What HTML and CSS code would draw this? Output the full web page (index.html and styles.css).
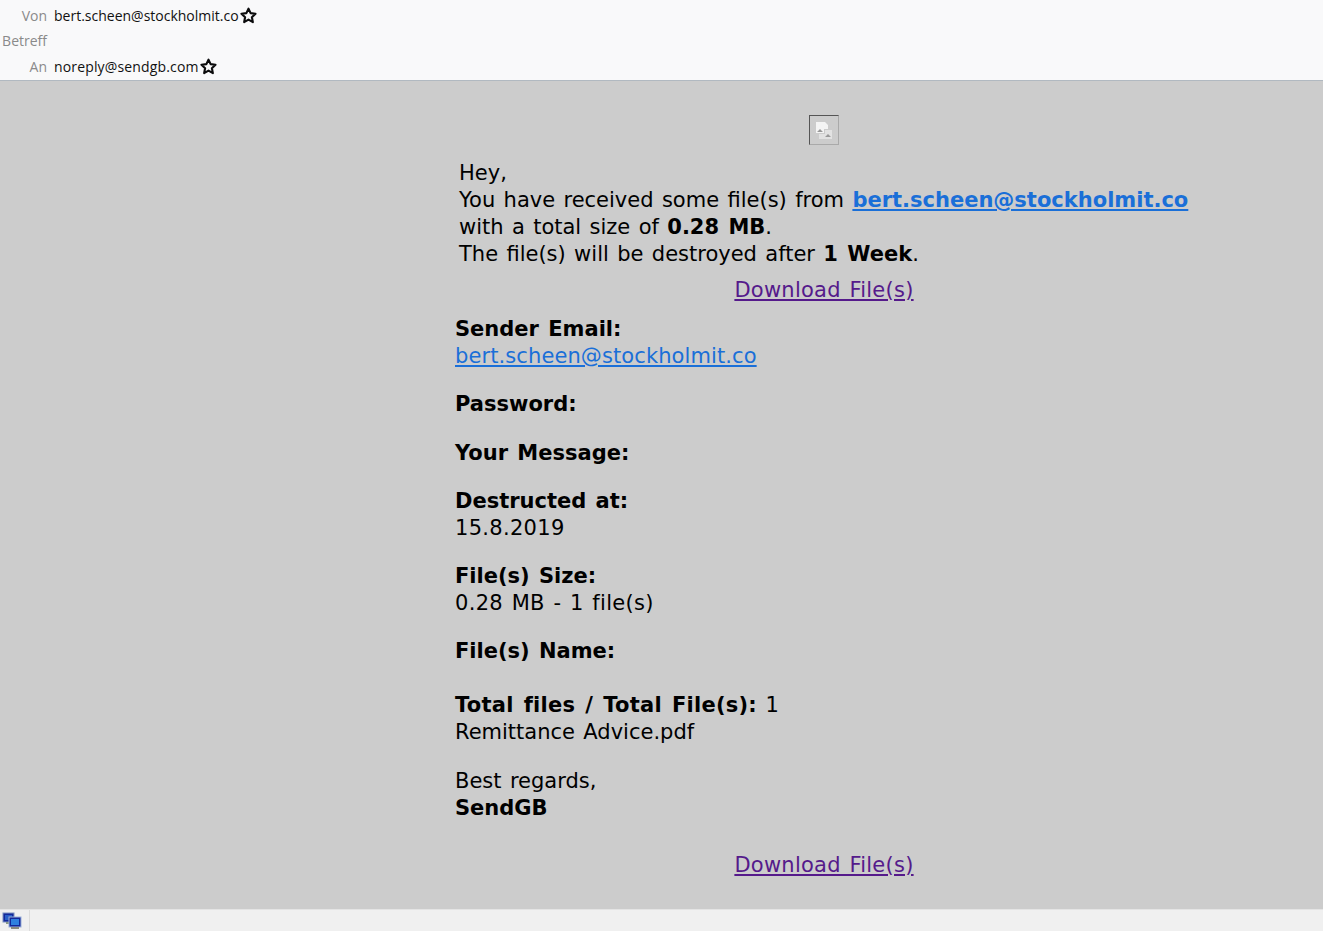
FILE: index.html
```html
<!DOCTYPE html>
<html lang="de">
<head>
<meta charset="utf-8">
<title>Von bert.scheen@stockholmit.co</title>
<link rel="stylesheet" href="styles.css">
</head>
<body>
<div class="app">
  <header class="headers">
    <div class="hrow"><span class="hlabel">Von</span><span class="hvalue">bert.scheen@stockholmit.co</span>
      <svg class="star" viewBox="0 0 16 16"><path d="M8 1.6l2 4.2 4.6.6-3.4 3.2.9 4.6L8 11.9l-4.1 2.3.9-4.6L1.400 6.400l4.600-.6z"/></svg></div>
    <div class="hrow hrow-mid"><span class="hlabel">Betreff</span></div>
    <div class="hrow"><span class="hlabel">An</span><span class="hvalue hvalue-to">noreply@sendgb.com</span>
      <svg class="star" viewBox="0 0 16 16"><path d="M8 1.6l2 4.2 4.6.6-3.4 3.2.9 4.6L8 11.9l-4.1 2.3.9-4.6L1.400 6.400l4.600-.6z"/></svg></div>
  </header>
  <main class="mail">
    <div class="column">
      <div class="logo"><div class="broken">
        <svg viewBox="0 0 16 17" class="broken-icon"><path class="b1" d="M0 0h9l3 3v4H8v4H0z"/><path class="b2" d="M9 8h7v9H3v-5h6z"/><path class="b3" d="M1 10l3-3 3 3zM9 15l3-3 3 3z"/></svg>
      </div></div>
      <p class="intro">Hey,<br>You have received some file(s) from <a class="mlink" href="#"><b>bert.scheen@stockholmit.co</b></a><br>with a total size of <b>0.28 MB</b>.<br>The file(s) will be destroyed after <b>1 Week</b>.</p>
      <div class="dl dl-top"><a class="vlink" href="#">Download File(s)</a></div>
      <div class="details">
        <p class="block"><b>Sender Email:</b><br><a class="mlink mlink-plain" href="#">bert.scheen@stockholmit.co</a></p>
        <p class="block block-pass"><b>Password:</b></p>
        <p class="block"><b>Your Message:</b></p>
        <p class="block"><b>Destructed at:</b><br><span class="nums">15.8.2019</span></p>
        <p class="block"><b>File(s) Size:</b><br><span class="nums">0.28 MB - 1 file(s)</span></p>
        <p class="block block-names"><b>File(s) Name:</b></p>
        <p class="block block-total"><b class="wide">Total files / Total File(s):</b> 1<br>Remittance Advice.pdf</p>
        <p class="block-last">Best regards,<br><b>SendGB</b></p>
      </div>
      <div class="dl dl-bottom"><a class="vlink" href="#">Download File(s)</a></div>
    </div>
  </main>
  <footer class="status">
    <div class="status-cell">
      <svg class="net" viewBox="0 0 20 18"><rect x="1" y="1" width="11" height="9" fill="#14289a" stroke="#7a8fc0"/><rect x="3" y="3" width="7" height="5" fill="#2a5fc8"/><rect x="4" y="10" width="6" height="2" fill="#8a9a8a"/><rect x="7" y="5" width="12" height="10" fill="#14289a" stroke="#9ab0d8"/><rect x="9" y="7" width="8" height="6" fill="#2f80e0"/><rect x="9" y="15" width="8" height="2" fill="#8a8a80"/></svg>
    </div>
  </footer>
</div>
</body>
</html>
```
FILE: styles.css
```css
* { box-sizing: border-box; }
html, body { margin: 0; height: 100%; }
.app { width: 1323px; height: 931px; display: flex; flex-direction: column; overflow: hidden; background: #ccc; }
.headers { height: 81px; background: #f9f9fa; border-bottom: 1px solid #b1b9c1; padding-top: 3px; font-family: "Open Sans", sans-serif; font-size: 14px; flex: none; }
.hrow { height: 25px; display: flex; align-items: center; }
.hrow-mid { height: 26px; padding-bottom: 2px; }
.hlabel { width: 47px; text-align: right; color: #8a8a8a; }
.hvalue { margin-left: 7px; color: #111; }
.hvalue-to { letter-spacing: 0.15px; }
.star { width: 17px; height: 17px; margin-left: 1px; fill: none; stroke: #0c0c0d; stroke-width: 2; stroke-linejoin: round; }
.mail { flex: 1; font-family: "DejaVu Sans", Verdana, sans-serif; font-size: 21px; line-height: 27px; color: #000; word-spacing: 1.7px; }
.mail b { word-spacing: 2px; }
.mail b.wide { word-spacing: 2.5px; letter-spacing: 0.25px; }
.nums { letter-spacing: 0.3px; }
.column { width: 740px; margin-left: 455px; padding-top: 34px; }
.logo { height: 30px; display: flex; justify-content: center; width: 738px; }
.broken { width: 30px; height: 30px; border: 1px solid; border-color: #555 #a9a9a9 #a9a9a9 #555; display: flex; align-items: center; justify-content: center; }
.broken-icon { width: 16px; height: 17px; }
.b1 { fill: #f4f4f4; }
.b2 { fill: #e2e2e2; }
.b3 { fill: #999; }
p { margin: 0; }
.intro { margin: 15px 0 0 4px; }
.dl { width: 738px; text-align: center; }
.dl-top { margin-top: 9px; }
.dl-bottom { margin-top: 30px; }
.details { margin-top: 12px; }
.block { margin-bottom: 21px; }
.block-pass { margin-bottom: 22px; }
.block-names { margin-bottom: 27px; }
.block-total { margin-bottom: 22px; }
.mlink { color: #1a6fd8; }
.mlink-plain { letter-spacing: 0.1px; }
.vlink { color: #551a8b; letter-spacing: 0.25px; }
.status { height: 22px; flex: none; background: #f0f0f0; border-top: 1px solid #e4e4e4; }
.status-cell { width: 30px; height: 21px; border-right: 1px solid #dcdcdc; padding: 2px 0 0 2px; }
.net { width: 20px; height: 18px; display: block; }
```
